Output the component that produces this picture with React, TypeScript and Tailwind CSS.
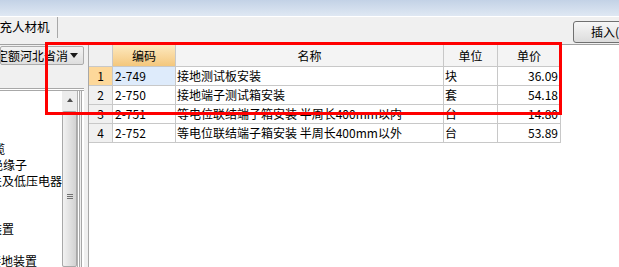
const rows = [
  { no: 1, code: "2-749", name: "接地测试板安装", unit: "块", price: "36.09" },
  { no: 2, code: "2-750", name: "接地端子测试箱安装", unit: "套", price: "54.18" },
  { no: 3, code: "2-751", name: "等电位联结端子箱安装 半周长400mm以内", unit: "台", price: "14.80" },
  { no: 4, code: "2-752", name: "等电位联结端子箱安装 半周长400mm以外", unit: "台", price: "53.89" },
];

// tree items on the left, cut off by the panel edge
const treeItems = [
  { text: "", ml: "" },
  { text: "", ml: "" },
  { text: "", ml: "" },
  { text: "电缆", ml: "ml-[-19px]" },
  { text: "绝缘子", ml: "ml-[-9px]" },
  { text: "开关及低压电器", ml: "ml-[-22px]" },
  { text: "", ml: "" },
  { text: "", ml: "" },
  { text: "避雷装置", ml: "ml-[-34px]" },
  { text: "", ml: "" },
  { text: "接地装置", ml: "ml-[-11px]" },
];

export default function App() {
  return (
    <div
      className="relative w-[619px] h-[267px] overflow-hidden bg-[#f0f0f0] text-[12px] text-black flex flex-col"
      style={{ fontFamily: '"Noto Sans CJK SC", "Noto Sans", sans-serif' }}
    >
      {/* title band */}
      <div className="h-[17px] shrink-0 bg-gradient-to-b from-[#c3d2e6] to-[#dfe8f3] border-b border-white" />

      {/* toolbar row */}
      <div className="h-[27px] shrink-0 flex items-start overflow-hidden">
        <div className="w-[58px] h-[21px] shrink-0 overflow-hidden border-r border-[#a8a8a8] flex items-center">
          <span className="ml-[-13px] whitespace-nowrap text-[12.5px] leading-none">补充人材机</span>
        </div>
        <div className="flex-1" />
        <button className="mt-[4px] mr-[-30px] w-[76px] h-[22px] shrink-0 rounded-[3px] border border-[#707070] bg-gradient-to-b from-[#f7f7f7] to-[#dcdcdc] flex items-center pl-[17px] whitespace-nowrap leading-none">
          插入(<span className="text-[#1a5fb4]">I</span>)
        </button>
      </div>

      {/* main area */}
      <div className="flex-1 flex border-t border-[#a0a0a0] min-h-0">
        {/* left panel */}
        <div className="w-[84px] shrink-0 flex flex-col">
          <div className="mt-[1px] h-[19px] w-[84px] overflow-hidden rounded-[2px] border border-[#acacac] bg-gradient-to-b from-[#f3f3f3] to-[#dedede] flex items-center">
            <span className="ml-[-5px] whitespace-nowrap leading-none flex-1 overflow-hidden">定额河北省消</span>
            <svg width="8" height="5" viewBox="0 0 8 5" className="mr-[5px] shrink-0">
              <path d="M0 0 H8 L4 5 Z" fill="#1a1a1a" />
            </svg>
          </div>
          <div className="mt-[23px] flex-1 flex border-t-[3px] border-double border-[#a8a8a8] bg-white min-h-0">
            <div className="w-[62px] shrink-0 overflow-hidden pt-[2px]">
              {treeItems.map((it, i) => (
                <div key={i} className="h-[16px] flex items-center whitespace-nowrap leading-none">
                  <span className={it.ml}>{it.text}</span>
                </div>
              ))}
            </div>
            {/* scrollbar */}
            <div className="w-[16px] shrink-0 flex flex-col bg-[#ececec] border-r border-[#b0b0b0]">
              <div className="h-[18px] flex items-center justify-center">
                <svg width="6" height="4" viewBox="0 0 6 4">
                  <path d="M0 4 L3 0 L6 4 Z" fill="#505050" />
                </svg>
              </div>
              <div className="flex-1 mt-[2px] rounded-[2px] border border-[#a8a8a8] bg-gradient-to-r from-[#f2f2f2] to-[#d2d2d2] flex items-center justify-center">
                <div className="flex flex-col gap-[1px] mt-[14px]">
                  <div className="w-[6px] h-[1px] bg-[#707070]" />
                  <div className="w-[6px] h-[1px] bg-[#707070]" />
                  <div className="w-[6px] h-[1px] bg-[#707070]" />
                </div>
              </div>
            </div>
            <div className="w-[2px] shrink-0 bg-white border-r border-[#a8a8a8]" />
            <div className="w-[2px] shrink-0 bg-[#f0f0f0] border-r border-[#a8a8a8]" />
          </div>
        </div>

        <div className="w-[4px] shrink-0" />

        {/* grid panel */}
        <div className="flex-1 bg-white border-l border-[#a8a8a8] min-w-0">
          <div className="grid grid-cols-[24px_63px_268px_54px_63px] w-max">
            <div className="h-[22px] border-r border-b border-[#c8c8c8] bg-[#f0f0f0]" />
            <div className="h-[22px] border-r border-b border-[#c8c8c8] bg-gradient-to-b from-[#fde9bf] to-[#f4c77c] flex items-center justify-center">编码</div>
            <div className="h-[22px] border-r border-b border-[#c8c8c8] bg-[#f4f4f4] flex items-center justify-center">名称</div>
            <div className="h-[22px] border-r border-b border-[#c8c8c8] bg-[#f4f4f4] flex items-center justify-center">单位</div>
            <div className="h-[22px] border-r border-b border-[#c8c8c8] bg-[#f4f4f4] flex items-center justify-center">单价</div>
            {rows.map((r) => (
              <div key={r.no} className="contents">
                <div className={`h-[19px] border-r border-b border-[#c8c8c8] flex items-center justify-center ${r.no === 1 ? "bg-[#fdd89a]" : "bg-[#f0f0f0]"}`}>{r.no}</div>
                <div className={`h-[19px] border-r border-b border-[#c8c8c8] flex items-center pl-[2px] whitespace-nowrap ${r.no === 1 ? "bg-[#deebfb]" : ""}`}>{r.code}</div>
                <div className="h-[19px] border-r border-b border-[#c8c8c8] flex items-center pl-[1px] whitespace-nowrap overflow-hidden">{r.name}</div>
                <div className="h-[19px] border-r border-b border-[#c8c8c8] flex items-center pl-[1px]">{r.unit}</div>
                <div className="h-[19px] border-r border-b border-[#c8c8c8] flex items-center justify-end pr-[2px]">{r.price}</div>
              </div>
            ))}
          </div>
        </div>
      </div>

      {/* red annotation box */}
      <div className="absolute left-[45px] top-[42px] w-[517px] h-[73px] border-[3px] border-[#ff0000]" />
    </div>
  );
}
